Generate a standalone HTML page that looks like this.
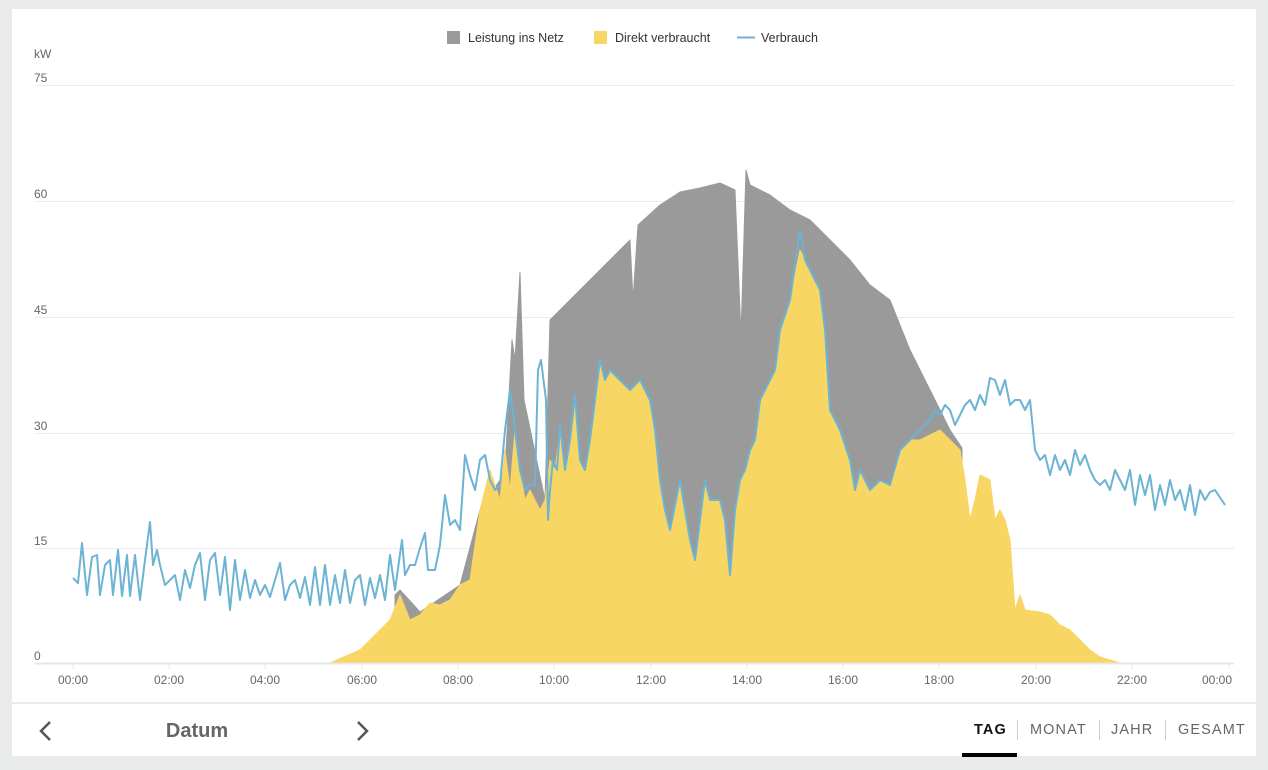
<!DOCTYPE html>
<html><head><meta charset="utf-8"><style>
body{margin:0;background:#e9eaea;width:1268px;height:770px;position:relative;font-family:"Liberation Sans",sans-serif;overflow:hidden}
.card{position:absolute;left:12px;top:9px;width:1244px;height:747px;background:#fff}
.bar{position:absolute;left:12px;top:702px;width:1244px;height:2px;background:#e9eaea}
.t{position:absolute;font-size:14.5px;letter-spacing:1.1px;color:#666;top:722px}
.sep{position:absolute;top:720px;width:1px;height:20px;background:#ccc}
</style></head><body>
<div class="card"></div>
<svg width="1268" height="770" style="position:absolute;left:0;top:0" font-family="Liberation Sans, sans-serif">
<g stroke="#ebebeb" stroke-width="1">
<line x1="35" x2="1234" y1="85.5" y2="85.5"/><line x1="35" x2="1234" y1="201.5" y2="201.5"/><line x1="35" x2="1234" y1="317.5" y2="317.5"/><line x1="35" x2="1234" y1="433.5" y2="433.5"/><line x1="35" x2="1234" y1="548.5" y2="548.5"/>
</g>
<g font-size="12" fill="#666">
<text x="34" y="58">kW</text>
<text x="34" y="82">75</text><text x="34" y="198">60</text><text x="34" y="314">45</text><text x="34" y="430">30</text><text x="34" y="545">15</text><text x="34" y="660">0</text>
</g>
<path fill="#9a9a9a" stroke="#9a9a9a" stroke-linejoin="round" d="M395,663 L395,595 L400,590 L420,612 L460,585 L480,510 L500,480 L505,470 L512,340 L515,360 L520,272 L524,400 L545,500 L550,320 L560,310 L580,290 L600,270 L620,250 L630,240 L633,300 L638,225 L660,205 L680,192 L700,188 L720,183 L735,190 L741,335 L746,170 L750,185 L770,195 L790,210 L810,220 L830,240 L850,260 L870,285 L890,300 L910,350 L930,390 L950,430 L962,448 L962,663 Z"/>
<path fill="#f8d664" stroke="#f8d664" stroke-linejoin="round" d="M330,663 L360,650 L390,620 L400,595 L410,620 L420,615 L430,603 L440,605 L450,600 L460,585 L470,580 L480,510 L490,470 L500,500 L505,450 L510,490 L515,430 L520,470 L525,500 L530,490 L540,510 L545,500 L550,460 L555,470 L560,430 L565,470 L570,450 L575,400 L580,460 L585,470 L590,440 L595,400 L600,360 L605,380 L610,370 L620,380 L630,390 L640,380 L650,400 L655,430 L660,480 L665,510 L670,530 L680,480 L690,540 L695,560 L700,520 L705,480 L710,500 L720,500 L725,520 L730,575 L735,510 L740,480 L745,470 L750,450 L755,440 L760,400 L765,390 L770,380 L775,370 L780,330 L790,300 L800,250 L805,260 L810,270 L820,290 L825,330 L830,410 L835,420 L840,430 L850,460 L855,490 L860,470 L870,490 L880,480 L890,485 L900,450 L910,440 L920,440 L940,430 L960,450 L965,480 L970,520 L975,500 L980,475 L990,480 L995,520 L1000,510 L1005,520 L1010,540 L1015,610 L1020,595 L1025,610 L1040,612 L1050,615 L1060,625 L1070,630 L1080,640 L1090,650 L1100,657 L1120,663 Z"/>
<polyline fill="none" stroke="#6cb3d4" stroke-width="2" stroke-linejoin="round" points="73,578 78,583 82,543 87,595 92,557 97,555 100,595 105,565 110,560 113,595 118,550 122,596 127,555 130,596 135,555 140,600 145,560 150,522 153,565 157,550 160,565 165,585 170,580 175,575 180,600 185,570 190,588 195,565 200,553 205,600 210,560 215,553 220,595 225,557 230,610 235,560 240,600 245,570 250,598 255,580 260,595 265,585 270,597 275,580 280,563 285,600 290,585 295,580 300,598 305,577 310,605 315,567 320,605 325,565 330,605 335,575 340,603 345,570 350,603 355,580 360,575 365,605 370,578 375,598 380,575 385,600 390,555 395,590 402,540 405,575 410,565 415,565 420,548 425,533 428,570 435,570 440,545 445,495 450,525 455,520 460,530 465,455 470,475 475,490 480,460 485,455 490,480 495,490 500,485 505,430 510,390 515,430 520,470 525,490 530,485 535,485 538,370 541,360 546,400 548,520 550,490 553,460 557,470 560,425 565,470 570,440 575,395 580,460 585,470 590,440 595,400 600,360 605,380 610,370 620,380 630,390 640,380 650,400 655,430 660,480 665,510 670,530 680,480 690,540 695,560 700,520 705,480 710,500 720,500 725,520 730,575 735,510 740,480 745,470 750,450 755,440 760,400 765,390 770,380 775,370 780,330 790,300 800,230 805,260 810,270 820,290 825,330 830,410 835,420 840,430 850,460 855,490 860,470 870,490 880,480 890,485 900,450 910,440 920,430 930,420 935,410 940,415 945,405 950,410 955,425 960,415 965,405 970,400 975,410 980,395 985,405 990,378 995,380 1000,395 1005,380 1010,405 1015,400 1020,400 1025,410 1030,400 1035,450 1040,460 1045,455 1050,475 1055,455 1060,470 1065,460 1070,475 1075,450 1080,465 1085,455 1090,470 1095,480 1100,485 1105,480 1110,490 1115,470 1120,480 1125,490 1130,470 1135,505 1140,475 1145,495 1150,475 1155,510 1160,485 1165,505 1170,480 1175,500 1180,490 1185,510 1190,485 1195,515 1200,490 1205,500 1210,492 1215,490 1225,505"/>
<line x1="35" x2="1234" y1="663.5" y2="663.5" stroke="#e6e6e6" stroke-width="2"/>
<g stroke="#e6e6e6"><line x1="73" x2="73" y1="664" y2="669"/><line x1="169" x2="169" y1="664" y2="669"/><line x1="265" x2="265" y1="664" y2="669"/><line x1="362" x2="362" y1="664" y2="669"/><line x1="458" x2="458" y1="664" y2="669"/><line x1="554" x2="554" y1="664" y2="669"/><line x1="651" x2="651" y1="664" y2="669"/><line x1="747" x2="747" y1="664" y2="669"/><line x1="843" x2="843" y1="664" y2="669"/><line x1="939" x2="939" y1="664" y2="669"/><line x1="1036" x2="1036" y1="664" y2="669"/><line x1="1132" x2="1132" y1="664" y2="669"/><line x1="1229" x2="1229" y1="664" y2="669"/></g>
<g font-size="12" fill="#666" text-anchor="middle">
<text x="73" y="684">00:00</text><text x="169" y="684">02:00</text><text x="265" y="684">04:00</text><text x="362" y="684">06:00</text><text x="458" y="684">08:00</text><text x="554" y="684">10:00</text><text x="651" y="684">12:00</text><text x="747" y="684">14:00</text><text x="843" y="684">16:00</text><text x="939" y="684">18:00</text><text x="1036" y="684">20:00</text><text x="1132" y="684">22:00</text><text x="1217" y="684">00:00</text>
</g>
<rect x="447" y="31" width="13" height="13" fill="#9a9a9a"/><text x="468" y="42" font-size="12.5" fill="#333">Leistung ins Netz</text>
<rect x="594" y="31" width="13" height="13" fill="#f8d664"/><text x="615" y="42" font-size="12.5" fill="#333">Direkt verbraucht</text>
<line x1="737" x2="755" y1="37.5" y2="37.5" stroke="#6cb3d4" stroke-width="2"/><text x="761" y="42" font-size="12.5" fill="#333">Verbrauch</text>
<path d="M50,722 L41,731 L50,740" fill="none" stroke="#555" stroke-width="2.5"/>
<path d="M358,722 L367,731 L358,740" fill="none" stroke="#555" stroke-width="2.5"/>
<text x="197" y="737" font-size="20" font-weight="bold" fill="#666" text-anchor="middle">Datum</text>
</svg>
<div class="bar"></div>
<div class="t" style="left:974px;color:#111;font-weight:bold">TAG</div>
<div class="sep" style="left:1017px"></div>
<div class="t" style="left:1030px">MONAT</div>
<div class="sep" style="left:1099px"></div>
<div class="t" style="left:1111px">JAHR</div>
<div class="sep" style="left:1165px"></div>
<div class="t" style="left:1178px">GESAMT</div>
<div style="position:absolute;left:962px;top:753px;width:55px;height:4px;background:#000"></div>
</body></html>
